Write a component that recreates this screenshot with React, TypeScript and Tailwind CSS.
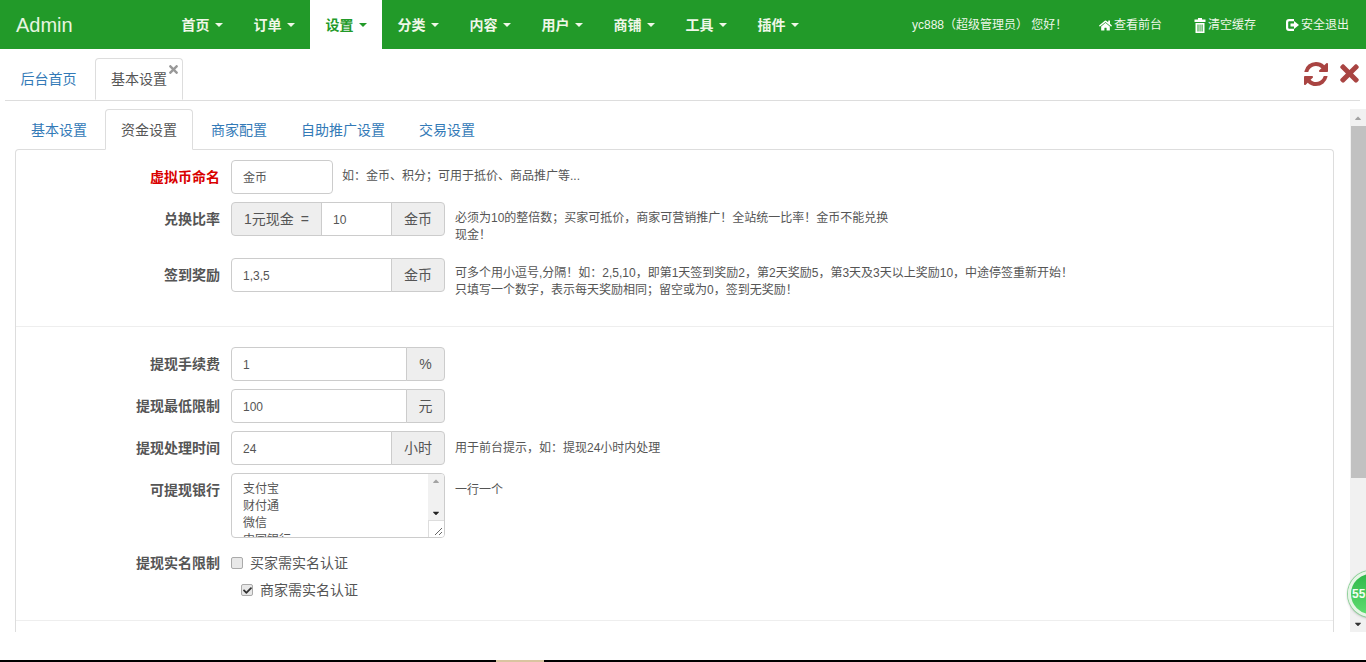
import React from "react";
import { FaHome, FaTimes, FaCheck, FaCaretUp, FaCaretDown } from "react-icons/fa";

const font = "font-['Liberation_Sans','Noto_Sans_CJK_SC',sans-serif]";
const menu = ["首页", "订单", "设置", "分类", "内容", "用户", "商铺", "工具", "插件"];

function Caret() {
  return <span className="ml-[5px] inline-block w-0 h-0 border-x-[4px] border-x-transparent border-t-[4px] border-t-current align-middle" />;
}

function TrashIcon() {
  return (
    <svg width="12" height="15" viewBox="0 0 12 15" className="shrink-0">
      <path d="M4 0h4v1.5h3.5V4H.5V1.5H4z" fill="#fff" />
      <path d="M1.5 5h9v10h-9zM3.5 6.5v7h1v-7zM5.6 6.5v7h.9v-7zM7.6 6.5v7h1v-7z" fill="#fff" fillRule="evenodd" />
    </svg>
  );
}

function LogoutIcon() {
  return (
    <svg width="13" height="12" viewBox="0 0 13 12" className="shrink-0">
      <path d="M8 0H3a3 3 0 0 0-3 3v6a3 3 0 0 0 3 3h5v-2.2H3.2a1 1 0 0 1-1-1V3.2a1 1 0 0 1 1-1H8z" fill="#fff" />
      <path d="M4.5 4.5H8V2l5 4-5 4V7.5H4.5z" fill="#fff" />
    </svg>
  );
}

function RefreshIcon() {
  return (
    <svg width="28" height="28" viewBox="0 0 1792 1792" fill="currentColor" className="shrink-0">
      <path d="M1639 1056q0 5-1 7-64 268-268 434.5t-478 166.5q-146 0-282.5-55t-243.5-157l-129 129q-19 19-45 19t-45-19-19-45v-448q0-26 19-45t45-19h448q26 0 45 19t19 45-19 45l-137 137q71 66 161 102t187 36q134 0 250-65t186-179q11-17 53-117 8-23 30-23h192q13 0 22.5 9.5t9.5 22.5zm25-800v448q0 26-19 45t-45 19h-448q-26 0-45-19t-19-45 19-45l138-138q-148-137-349-137-134 0-250 65t-186 179q-11 17-53 117-8 23-30 23h-199q-13 0-22.5-9.5t-9.5-22.5v-7q65-268 270-434.5t480-166.5q146 0 284 55.5t245 156.5l130-129q19-19 45-19t45 19 19 45z" />
    </svg>
  );
}

function NavBar() {
  return (
    <nav className="h-[49px] shrink-0 bg-[#229a29] flex items-center text-white">
      <div className="w-[166px] pl-4 text-[20px] text-[#e8f5e0]">Admin</div>
      <ul className="flex h-full">
        {menu.map((m) => (
          <li
            key={m}
            className={`w-[72px] pt-px flex items-center justify-center text-[14px] font-bold ${m === "设置" ? "bg-white text-[#229a29]" : "text-[#f0f7e8]"}`}
          >
            {m}
            <Caret />
          </li>
        ))}
      </ul>
      <div className="ml-auto pt-px flex items-center text-[12px] text-[#eef7ea] h-full">
        <span className="w-[187px]">yc888（超级管理员） 您好！</span>
        <span className="w-[95px] flex items-center gap-[2px]"><FaHome className="text-[13px] text-white" />查看前台</span>
        <span className="w-[92px] flex items-center gap-[2px]"><TrashIcon />清空缓存</span>
        <span className="w-[80px] flex items-center gap-[2px]"><LogoutIcon />安全退出</span>
      </div>
    </nav>
  );
}

function TopTabs() {
  return (
    <div className="h-[52px] shrink-0 ml-[5px] mr-[6px] pt-[10px] pl-[1px] border-b border-[#ddd] flex items-stretch text-[14px]">
      <span className="w-[85px] mr-[4px] flex items-center justify-center text-[#337ab7]">后台首页</span>
      <span className="relative w-[88px] h-[42px] -mt-px flex items-center justify-center bg-white border border-[#ddd] border-b-white rounded-t-[4px] text-[#555]">
        基本设置
        <FaTimes className="absolute right-[2px] top-[4px] text-[13px] text-[#999]" />
      </span>
      <div className="ml-auto -mr-[3px] flex items-center gap-[6px] pb-[12px] text-[#a94442]">
        <RefreshIcon />
        <FaTimes className="text-[27px]" />
      </div>
    </div>
  );
}

function InnerTabs() {
  const tabs = ["基本设置", "资金设置", "商家配置", "自助推广设置", "交易设置"];
  return (
    <div className="h-[41px] shrink-0 pl-px flex gap-[3px] text-[14px] relative z-10">
      {tabs.map((t, i) =>
        i === 1 ? (
          <span key={t} className="h-[41px] pt-px px-[15px] flex items-center bg-white border border-[#ddd] border-b-white rounded-t-[4px] text-[#555]">{t}</span>
        ) : (
          <span key={t} className={`h-[41px] pt-px px-[15px] flex items-center text-[#337ab7] ${i > 2 ? "ml-px" : ""}`}>{t}</span>
        ),
      )}
    </div>
  );
}

function Label({ children, red }: { children: React.ReactNode; red?: boolean }) {
  return (
    <label className={`w-[204px] shrink-0 text-right text-[14px] font-bold leading-[34px] ${red ? "text-[#d90000]" : "text-[#555]"}`}>
      {children}
    </label>
  );
}

const box = "h-[34px] pt-px border border-[#ccc] bg-white flex items-center px-[11px] text-[12px] text-[#555]";
const addon = "h-[34px] border border-[#ccc] bg-[#eee] flex items-center justify-center text-[14px] text-[#555]";

function Group({ value, unit, wide }: { value: string; unit: string; wide?: boolean }) {
  return (
    <div className="w-[214px] flex shrink-0">
      <div className={`${box} flex-1 rounded-l-[4px]`}>{value}</div>
      <div className={`${addon} -ml-px rounded-r-[4px] ${wide ? "w-[54px]" : "w-[39px]"}`}>{unit}</div>
    </div>
  );
}

function Help({ children, className = "" }: { children: React.ReactNode; className?: string }) {
  return <div className={`text-[12px] leading-[17px] text-[#555] ${className}`}>{children}</div>;
}

function Check({ checked, children, className = "" }: { checked?: boolean; children: React.ReactNode; className?: string }) {
  return (
    <div className={`flex items-center gap-[7px] text-[14px] text-[#555] ${className}`}>
      <span className="w-[12px] h-[12px] rounded-[2px] border border-[#aaa] bg-[#e8e8e8] flex items-center justify-center">
        {checked && <FaCheck className="text-[9px] text-[#333]" />}
      </span>
      {children}
    </div>
  );
}

function Form() {
  return (
    <div className="flex-1 min-h-0 -mt-px border border-[#ddd] border-b-0 rounded-t-[4px] overflow-hidden">
      <div className="pt-[10px]">
        <div className="flex h-[34px] gap-[11px]">
          <Label red>虚拟币命名</Label>
          <div className={`${box} w-[102px] rounded-[4px]`}>金币</div>
          <Help className="ml-[-2px] leading-[32px]">如：金币、积分；可用于抵价、商品推广等...</Help>
        </div>
        <div className="flex h-[34px] gap-[11px] mt-[8px]">
          <Label>兑换比率</Label>
          <div className="w-[214px] flex shrink-0">
            <div className={`${addon} w-[91px] rounded-l-[4px] gap-[7px]`}><span>1元现金</span><span>=</span></div>
            <div className={`${box} -ml-px w-[71px]`}>10</div>
            <div className={`${addon} -ml-px w-[54px] rounded-r-[4px]`}>金币</div>
          </div>
          <Help className="w-[440px] -ml-px pt-[8px]">必须为10的整倍数；买家可抵价，商家可营销推广！全站统一比率！金币不能兑换现金！</Help>
        </div>
        <div className="flex h-[34px] gap-[11px] mt-[22px]">
          <Label>签到奖励</Label>
          <Group value="1,3,5" unit="金币" wide />
          <Help className="-ml-px pt-[7px]">
            可多个用小逗号,分隔！如：2,5,10，即第1天签到奖励2，第2天奖励5，第3天及3天以上奖励10，中途停签重新开始！<br />
            只填写一个数字，表示每天奖励相同；留空或为0，签到无奖励！
          </Help>
        </div>
      </div>
      <div className="h-px bg-[#eee] mt-[34px]" />
      <div className="pt-[20px]">
        <div className="flex h-[34px] gap-[11px]">
          <Label>提现手续费</Label>
          <Group value="1" unit="%" />
        </div>
        <div className="flex h-[34px] gap-[11px] mt-[8px]">
          <Label>提现最低限制</Label>
          <Group value="100" unit="元" />
        </div>
        <div className="flex h-[34px] gap-[11px] mt-[8px]">
          <Label>提现处理时间</Label>
          <Group value="24" unit="小时" wide />
          <Help className="-ml-px leading-[34px]">用于前台提示，如：提现24小时内处理</Help>
        </div>
        <div className="flex h-[65px] gap-[11px] mt-[8px]">
          <Label>可提现银行</Label>
          <div className="relative w-[214px] h-[65px] border border-[#ccc] rounded-[4px] overflow-hidden pl-[11px] pt-[7px] text-[12px] leading-[17px] text-[#555]">
            支付宝<br />财付通<br />微信<br />中国银行
            <div className="absolute right-0 top-0 w-[16px] h-[46px] bg-[#f1f1f1] flex flex-col items-center justify-between text-[10px] py-[2px]">
              <FaCaretUp className="text-[#a3a3a3]" />
              <FaCaretDown className="text-[#222]" />
            </div>
            <div className="absolute right-0 bottom-0 w-[16px] h-[17px] bg-white border-l border-t border-[#ddd] flex items-end justify-end">
              <svg width="9" height="9" viewBox="0 0 9 9" className="m-[1px]"><path d="M1 8 8 1M5 8 8 5" stroke="#666" strokeWidth="1" fill="none" /></svg>
            </div>
          </div>
          <Help className="-ml-px pt-[9px]">一行一个</Help>
        </div>
        <div className="flex gap-[11px] mt-[8px] h-[34px] items-center">
          <Label>提现实名限制</Label>
          <Check>买家需实名认证</Check>
        </div>
        <Check checked className="ml-[225px] -mt-[7px] h-[34px]">商家需实名认证</Check>
      </div>
      <div className="h-px bg-[#eee] mt-[13px]" />
    </div>
  );
}

function ScrollBar() {
  return (
    <div className="w-[16px] mt-[8px] shrink-0 bg-[#f1f1f1] flex flex-col items-center text-[10px]">
      <div className="h-[17px] flex items-center"><FaCaretUp className="text-[#a3a3a3]" /></div>
      <div className="w-[15px] h-[352px] bg-[#c1c1c1]" />
      <div className="flex-1" />
      <div className="h-[17px] flex items-center"><FaCaretDown className="text-[#333]" /></div>
    </div>
  );
}

export default function App() {
  return (
    <div className={`relative h-[662px] w-[1366px] overflow-hidden flex flex-col bg-white ${font}`}>
      <NavBar />
      <TopTabs />
      <div className="flex flex-1 min-h-0">
        <div className="flex-1 min-w-0 pl-[15px] pr-[16px] pt-[8px] flex flex-col">
          <InnerTabs />
          <Form />
        </div>
        <ScrollBar />
      </div>
      <div className="h-[30px] shrink-0 flex flex-col justify-end">
        <div className="h-[2px] bg-black flex">
          <div className="ml-[496px] w-[48px] bg-[#d9c4a0]" />
        </div>
      </div>
      <div className="absolute left-[1348px] top-[571px] w-[46px] h-[46px] rounded-full border-[3px] border-[#e6f6e6] bg-[linear-gradient(180deg,#2fb84a,#5fdc70)] shadow-[0_0_0_1px_#8fd49a,0_1px_3px_#999] flex items-center pl-[1px] text-[12px] font-bold text-[#f2fff2]">
        55
      </div>
    </div>
  );
}
